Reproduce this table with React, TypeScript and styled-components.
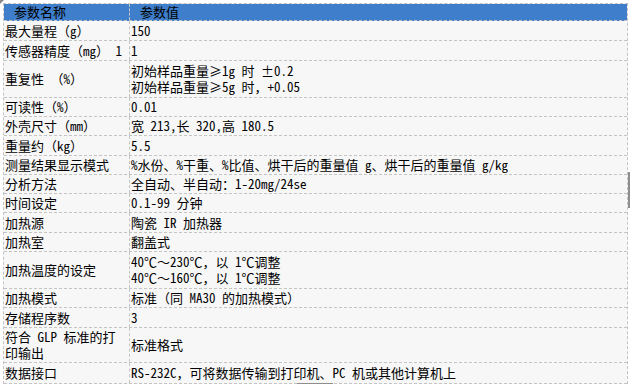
import React from "react";
import styled, { createGlobalStyle } from "styled-components";

const GlobalStyle = createGlobalStyle`
  html, body { margin: 0; padding: 0; background: #ffffff; }
  body {
    font-family: "Noto Sans Mono CJK SC", "Noto Sans CJK SC", "Liberation Mono", monospace;
    font-size: 13px;
    color: #000000;
  }
`;

const Page = styled.div`
  position: relative;
  width: 630px;
  height: 384px;
  padding: 3px 0 0 3px;
  box-sizing: border-box;
  overflow: hidden;
  &::before {
    content: "";
    position: absolute;
    left: 0;
    top: 0;
    width: 0;
    height: 0;
    border-top: 4px solid #8a8a8a;
    border-right: 4px solid transparent;
  }
`;

const Table = styled.div`
  width: 625px;
  box-sizing: border-box;
  border: 1px dashed #c4c4c4;
  border-bottom: none;
  background: #f7f7f7;
`;

const Row = styled.div<{ $h: number; $head?: boolean }>`
  display: grid;
  grid-template-columns: 126px 1fr;
  height: ${(p) => p.$h}px;
  box-sizing: border-box;
  border-bottom: 1px dashed #c4c4c4;
  background: ${(p) => (p.$head ? "#3e7eca" : "#f7f7f7")};
`;

const Cell = styled.div<{ $head?: boolean; $key?: boolean; $wrap?: boolean }>`
  display: flex;
  align-items: center;
  min-width: 0;
  box-sizing: border-box;
  padding-left: ${(p) => (p.$head ? 10 : 1)}px;
  padding-right: ${(p) => (p.$wrap ? 8 : 0)}px;
  line-height: 16px;
  white-space: ${(p) => (p.$wrap ? "normal" : "nowrap")};
  border-right: ${(p) => (p.$key ? "1px dashed #c4c4c4" : "none")};
`;

const Lines = styled.div`
  display: flex;
  flex-direction: column;
`;

const VScrollThumb = styled.div`
  position: absolute;
  right: 0;
  top: 172px;
  width: 2px;
  height: 36px;
  background: #8e8e8e;
`;

const HScrollThumb = styled.div`
  position: absolute;
  left: 297px;
  bottom: 0;
  width: 36px;
  height: 1px;
  background: #8e8e8e;
`;

type Item = { k: string; v: string[]; h: number; wrap?: boolean };

const rows: Item[] = [
  { k: "最大量程（g）", v: ["150"], h: 20 },
  { k: "传感器精度（mg） 1", v: ["1"], h: 20 },
  { k: "重复性 （%）", v: ["初始样品重量≥1g 时  ±0.2", "初始样品重量≥5g 时，+0.05"], h: 37 },
  { k: "可读性（%）", v: ["0.01"], h: 19 },
  { k: "外壳尺寸（mm）", v: ["宽 213,长 320,高 180.5"], h: 19 },
  { k: "重量约（kg）", v: ["5.5"], h: 20 },
  { k: "测量结果显示模式", v: ["%水份、%干重、%比值、烘干后的重量值 g、烘干后的重量值 g/kg"], h: 19 },
  { k: "分析方法", v: ["全自动、半自动：1-20mg/24se"], h: 19 },
  { k: "时间设定", v: ["0.1-99 分钟"], h: 19 },
  { k: "加热源", v: ["陶瓷 IR 加热器"], h: 20 },
  { k: "加热室", v: ["翻盖式"], h: 19 },
  { k: "加热温度的设定", v: ["40℃～230℃，以 1℃调整", "40℃～160℃，以 1℃调整"], h: 37 },
  { k: "加热模式", v: ["标准（同 MA30 的加热模式）"], h: 19 },
  { k: "存储程序数", v: ["3"], h: 20 },
  { k: "符合 GLP 标准的打印输出", v: ["标准格式"], h: 35, wrap: true },
  { k: "数据接口", v: ["RS-232C，可将数据传输到打印机、PC 机或其他计算机上"], h: 21 },
];

export default function App() {
  return (
    <>
      <GlobalStyle />
      <Page>
        <Table>
          <Row $h={17} $head>
            <Cell $head $key>参数名称</Cell>
            <Cell $head>参数值</Cell>
          </Row>
          {rows.map((r) => (
            <Row key={r.k} $h={r.h}>
              <Cell $key $wrap={r.wrap}>{r.k}</Cell>
              <Cell>
                <Lines>
                  {r.v.map((line) => (
                    <span key={line}>{line}</span>
                  ))}
                </Lines>
              </Cell>
            </Row>
          ))}
        </Table>
        <VScrollThumb />
        <HScrollThumb />
      </Page>
    </>
  );
}
